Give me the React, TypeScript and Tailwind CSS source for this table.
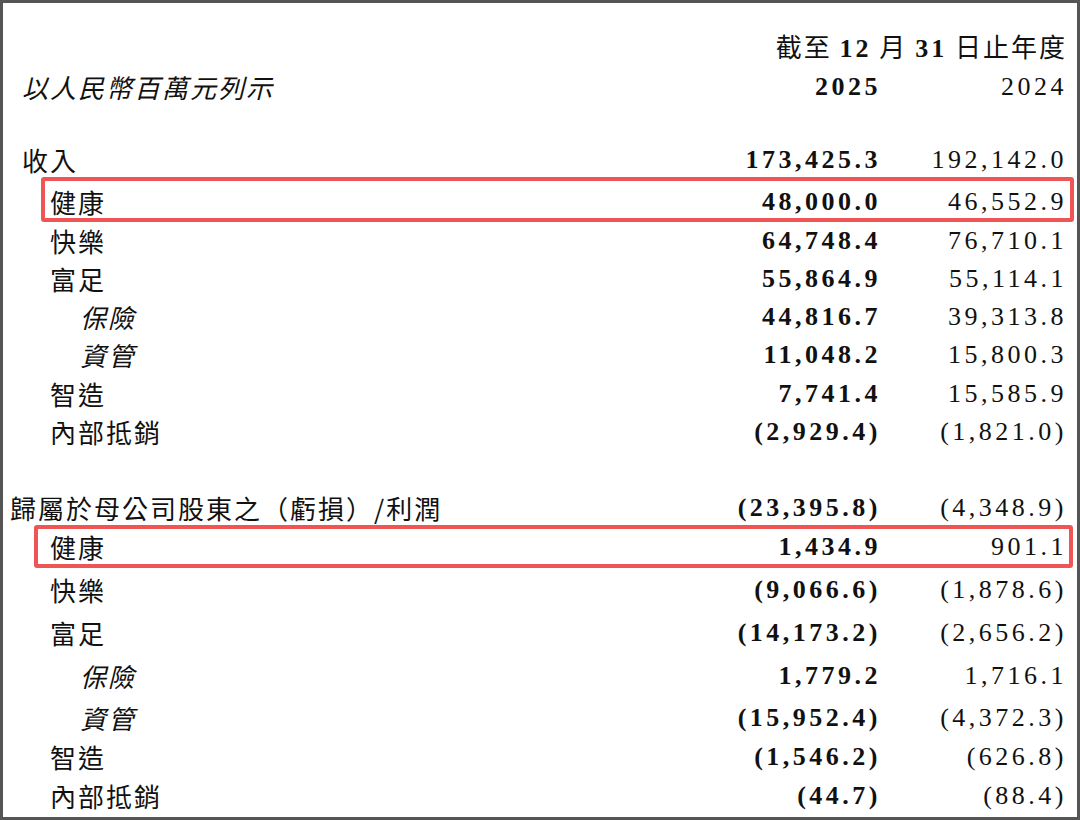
import React from "react";

const cjk = "font-['Noto_Sans_CJK_TC',sans-serif] text-[26px] tracking-[2px] text-[#111]";
const num = "font-['Liberation_Serif',serif] text-[26px] tracking-[3.5px] text-[#111] text-right";

type RowProps = {
  label: string;
  a: string;
  b: string;
  h: string;
  pad: string;
  italic?: boolean;
};

function Cells({ a, b }: { a: string; b: string }) {
  return (
    <>
      <div className={`${num} w-[200px] font-bold`}>{a}</div>
      <div className={`${num} w-[186px]`}>{b}</div>
    </>
  );
}

function Row({ label, a, b, h, pad, italic }: RowProps) {
  return (
    <div className={`flex items-center pr-[10px] ${h}`}>
      <div className={`flex-1 ${pad} ${cjk} ${italic ? "italic" : ""}`}>{label}</div>
      <Cells a={a} b={b} />
    </div>
  );
}

export default function App() {
  return (
    <div className="w-[1080px] h-[820px] box-border border-[3px] border-[#555] bg-white overflow-hidden">
      {/* header */}
      <div className="flex items-center justify-end pr-[10px] h-[38px] mt-[25px]">
        <div className={`${cjk} text-right`}>
          截至 <span className="font-['Liberation_Serif',serif] font-bold tracking-[3px]">12</span> 月{" "}
          <span className="font-['Liberation_Serif',serif] font-bold tracking-[3px]">31</span> 日止年度
        </div>
      </div>
      <div className="flex items-center pr-[10px] h-[40px]">
        <div className={`flex-1 pl-[19px] ${cjk} italic`}>以人民幣百萬元列示</div>
        <Cells a="2025" b="2024" />
      </div>

      <div className="h-[36px]" />

      {/* 收入 */}
      <Row label="收入" a="173,425.3" b="192,142.0" h="h-[35px]" pad="pl-[19px]" />
      <div className="flex items-center h-[45px] ml-[38px] mr-[3px] pr-[3px] pt-[4px] border-[4px] border-[#ef5555] rounded-[3px]">
        <div className={`flex-1 pl-[5px] ${cjk}`}>健康</div>
        <Cells a="48,000.0" b="46,552.9" />
      </div>
      <Row label="快樂" a="64,748.4" b="76,710.1" h="h-[37px]" pad="pl-[47px]" />
      <Row label="富足" a="55,864.9" b="55,114.1" h="h-[38px]" pad="pl-[47px]" />
      <Row label="保險" a="44,816.7" b="39,313.8" h="h-[38px]" pad="pl-[77px]" italic />
      <Row label="資管" a="11,048.2" b="15,800.3" h="h-[39px]" pad="pl-[77px]" italic />
      <Row label="智造" a="7,741.4" b="15,585.9" h="h-[38px]" pad="pl-[47px]" />
      <Row label="內部抵銷" a="(2,929.4)" b="(1,821.0)" h="h-[39px]" pad="pl-[47px]" />

      <div className="h-[38px]" />

      {/* 利潤 */}
      <Row label="歸屬於母公司股東之（虧損）/利潤" a="(23,395.8)" b="(4,348.9)" h="h-[36px]" pad="pl-[7px]" />
      <div className="flex items-center h-[43px] ml-[31px] mr-[4px] pr-[2px] border-[4px] border-[#ef5555] rounded-[3px]">
        <div className={`flex-1 pl-[12px] ${cjk}`}>健康</div>
        <Cells a="1,434.9" b="901.1" />
      </div>
      <Row label="快樂" a="(9,066.6)" b="(1,878.6)" h="h-[43px]" pad="pl-[47px]" />
      <Row label="富足" a="(14,173.2)" b="(2,656.2)" h="h-[43px]" pad="pl-[47px]" />
      <Row label="保險" a="1,779.2" b="1,716.1" h="h-[42px]" pad="pl-[77px]" italic />
      <Row label="資管" a="(15,952.4)" b="(4,372.3)" h="h-[42px]" pad="pl-[77px]" italic />
      <Row label="智造" a="(1,546.2)" b="(626.8)" h="h-[36px]" pad="pl-[47px]" />
      <Row label="內部抵銷" a="(44.7)" b="(88.4)" h="h-[42px]" pad="pl-[47px]" />
    </div>
  );
}
